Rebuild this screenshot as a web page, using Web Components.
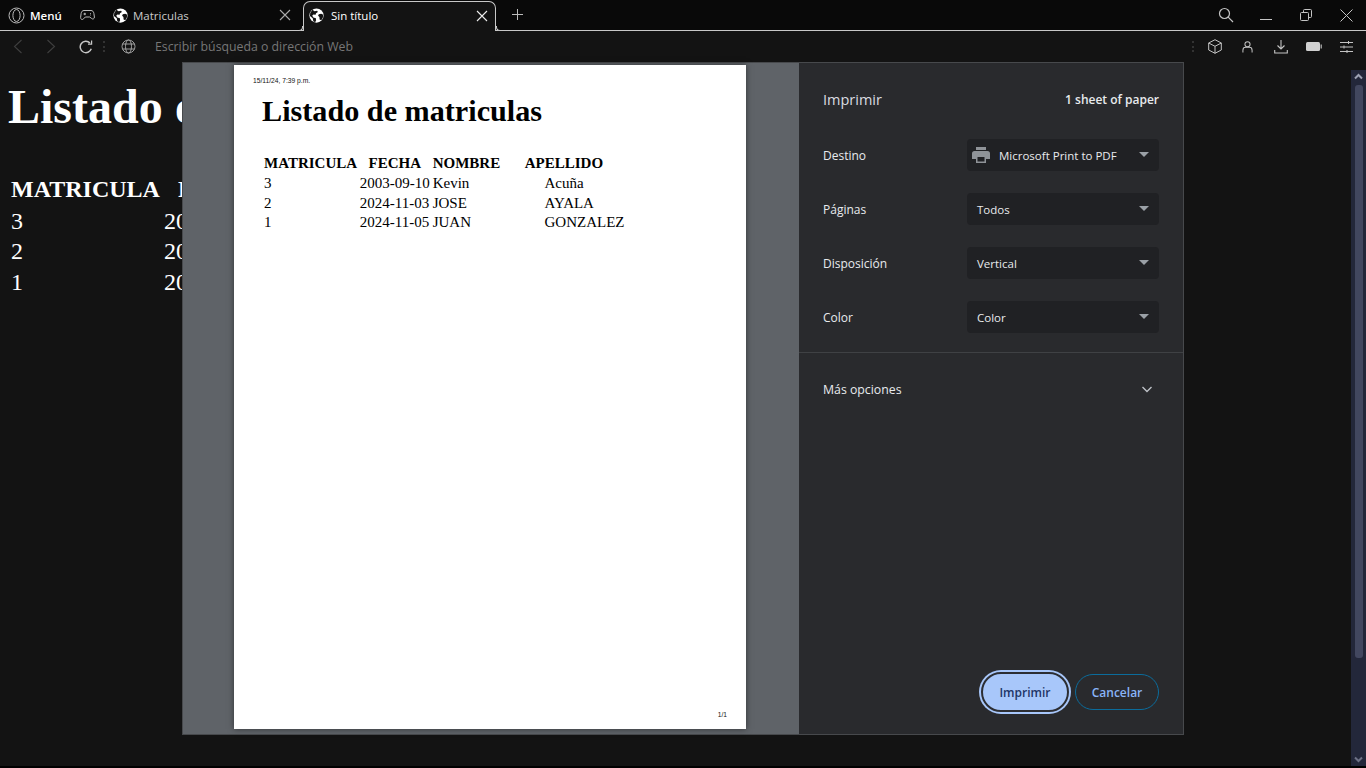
<!DOCTYPE html>
<html lang="es">
<head>
<meta charset="utf-8">
<title>Sin título</title>
<style>
    html, body{
        margin: 0;
        height: 100%;
        overflow: hidden;
        background: #000;
    }
    body{
        display: flex;
        flex-direction: column;
        height: 766px;
        position: relative;
        font-family: "Open Sans", "Liberation Sans", sans-serif;
    }
</style>
</head>
<body>
    <browser-tabs></browser-tabs>
    <browser-toolbar></browser-toolbar>
    <browser-page>
        <matricula-list style="font-size:24px;color:#fff;--h1:48px;--h1-top:17px;--h1-bottom:40px;--left:3px;--row:30.6px;--gap:4px;--head-pad:1px"></matricula-list>
    </browser-page>
    <print-dialog>
        <print-preview slot="preview">
            <matricula-list style="font-size:15px;color:#000;--h1:30.2px;--h1-top:1px;--h1-bottom:25px;--left:2px;--row:19.5px;--gap:2.8px;--head-pad:1px"></matricula-list>
        </print-preview>
        <print-row slot="rows" label="Destino" value="Microsoft Print to PDF" printer></print-row>
        <print-row slot="rows" label="Páginas" value="Todos"></print-row>
        <print-row slot="rows" label="Disposición" value="Vertical"></print-row>
        <print-row slot="rows" label="Color" value="Color"></print-row>
    </print-dialog>

<script>
const GLOBE = `<svg width="15" height="15" viewBox="0 0 16 16"><circle cx="8" cy="8" r="7.6" fill="#fff"/><path d="M3.6 1.9 6 3.4l2.6-.6.9 1.500-2 1.200-.5 1.700-2.300-.3-1.300 1.300 1.600 2.200 2.200.2.4 2.400-1 2.200-2-1.100-.6-3.200L1 8.400l.3-3zM10.400 6.600l2.600-.5 2.200 1.200-.5 3.200-1.600 2.600-1.800-.8-.2-2.700-1.400-1.300z" fill="#131313"/></svg>`;
const CROSS = `<svg width="12" height="12" viewBox="0 0 12 12"><path d="M1 1l10 10M11 1 1 11" stroke="currentColor" stroke-width="1.100" fill="none"/></svg>`;

class BrowserTabs extends HTMLElement {
    constructor(){
        super();
        this.attachShadow({mode: 'open'});
        this.shadowRoot.innerHTML = `
        <style>
            :host{
                display: flex;
                align-items: stretch;
                height: 31px;
                box-sizing: border-box;
                background: #090909;
                color: #fff;
                font-size: 11.500px;
                border-bottom: 1px solid #c8c8c8;
            }
            .menu{
                display: flex;
                align-items: center;
                gap: 5px;
                width: 80px;
                padding-left: 8px;
                box-sizing: border-box;
                font-weight: 600;
            }
            .pad{
                display: flex;
                align-items: center;
                width: 33px;
            }
            .tab{
                display: flex;
                align-items: center;
                gap: 5px;
                width: 190px;
                box-sizing: border-box;
                padding: 0 12px 0 0;
                color: #c9c9c9;
            }
            .tab span{ flex: 1; }
            .tab svg:last-child{ color: #aaa; }
            .tab.active{
                position: relative;
                width: 193px;
                margin: 1px 0 -1px 0;
                padding: 0 7px 2px 5px;
                gap: 7px;
                background: #131313;
                border: 1px solid #c8c8c8;
                border-bottom: 0;
                border-radius: 7px 7px 0 0;
                color: #fff;
            }
            .tab.active::before, .tab.active::after{
                content: "";
                position: absolute;
                bottom: 0;
                width: 4px;
                height: 4px;
                background: #090909;
                border-bottom: 1px solid #c8c8c8;
            }
            .tab.active::before{
                left: -6px;
                border-right: 1px solid #c8c8c8;
                border-bottom-right-radius: 4px;
            }
            .tab.active::after{
                right: -6px;
                border-left: 1px solid #c8c8c8;
                border-bottom-left-radius: 4px;
            }
            .tab.active svg:last-child{ color: #eee; }
            .plus{
                display: flex;
                align-items: center;
                padding: 0 0 2px 16px;
                color: #bbb;
            }
            .right{
                margin-left: auto;
                display: flex;
                align-items: center;
                color: #c4c4c4;
            }
            .right div{
                width: 40px;
                display: flex;
                justify-content: center;
            }
        </style>
        <div class="menu">
            <svg width="17" height="17" viewBox="0 0 17 17" fill="none" stroke="#bbb" stroke-width="1"><circle cx="8.500" cy="8.500" r="7.500"/><ellipse cx="8.500" cy="8.500" rx="3.600" ry="6"/></svg>
            <span>Menú</span>
        </div>
        <div class="pad">
            <svg width="15" height="12" viewBox="0 0 15 12" fill="none" stroke="#bbb" stroke-width="1"><path d="M4 1.500h7c1.600 0 2.500 1 2.900 3l.5 3.500c.2 1.800-1.800 2.700-3 1.300L9.700 8H5.300l-1.700 1.800C2.400 11.200.4 10.300.6 8.500l.5-4c.4-2 1.300-3 2.900-3z"/><path d="M3.500 5h2.500M4.800 3.800v2.400M10 4.500h.8M10 6h.8"/></svg>
        </div>
        <div class="tab">${GLOBE}<span>Matriculas</span>${CROSS}</div>
        <div class="tab active">${GLOBE}<span>Sin título</span>${CROSS}</div>
        <div class="plus"><svg width="11" height="11" viewBox="0 0 11 11"><path d="M5.500 0v11M0 5.500h11" stroke="currentColor" fill="none"/></svg></div>
        <div class="right">
            <div><svg width="16" height="16" viewBox="0 0 16 16" fill="none" stroke="currentColor" stroke-width="1.200"><circle cx="6.500" cy="6.500" r="5"/><path d="M10.200 10.200 15 15"/></svg></div>
            <div><svg width="12" height="12" viewBox="0 0 12 12"><path d="M0 10.500h12" stroke="currentColor" fill="none"/></svg></div>
            <div><svg width="12" height="12" viewBox="0 0 12 12" fill="none" stroke="currentColor"><rect x=".5" y="3.500" width="8" height="8" rx="1"/><path d="M3.500 3.500v-2a1 1 0 0 1 1-1h6a1 1 0 0 1 1 1v6a1 1 0 0 1-1 1h-2"/></svg></div>
            <div><svg width="13" height="13" viewBox="0 0 13 13"><path d="M.5.500l12 12M12.500.500l-12 12" stroke="currentColor" fill="none"/></svg></div>
        </div>`;
    }
}

class BrowserToolbar extends HTMLElement {
    constructor(){
        super();
        this.attachShadow({mode: 'open'});
        this.shadowRoot.innerHTML = `
        <style>
            :host{
                display: flex;
                align-items: center;
                height: 31px;
                background: #131313;
                color: #c4c4c4;
                font-size: 12.300px;
                padding-left: 13px;
            }
            .nav{ width: 33px; display: flex; color: #3f3f3f; }
            .reload{ width: 24px; display: flex; }
            .dots{ width: 2px; height: 11px; border-left: 2px dotted #333; margin-right: 14px; }
            .globe{ display: flex; margin-right: 19px; color: #aaa; }
            .hint{ color: #777; flex: 1; }
            .icons{ display: flex; align-items: center; }
            .icons .dots{ margin-right: 2px; }
            .icons div.i{ width: 33px; display: flex; justify-content: center; }
            .icons div.i:last-child{ margin-right: 3px; }
        </style>
        <div class="nav"><svg width="10" height="15" viewBox="0 0 10 15"><path d="M8.500 1 1.500 7.500l7 6.500" stroke="currentColor" fill="none" stroke-width="1.100"/></svg></div>
        <div class="nav"><svg width="10" height="15" viewBox="0 0 10 15"><path d="M1.500 1l7 6.500-7 6.500" stroke="currentColor" fill="none" stroke-width="1.100"/></svg></div>
        <div class="reload"><svg width="14" height="14" viewBox="0 0 14 14" fill="none" stroke="#c8c8c8" stroke-width="1.400"><path d="M12.300 8.800A5.700 5.700 0 1 1 11 3"/><path d="M12.600 .6v3.600H9" stroke-width="1.200"/></svg></div>
        <div class="dots"></div>
        <div class="globe"><svg width="15" height="15" viewBox="0 0 15 15" fill="none" stroke="currentColor" stroke-width=".9"><circle cx="7.500" cy="7.500" r="6.500"/><ellipse cx="7.500" cy="7.500" rx="3" ry="6.500"/><path d="M1.500 5h12M1.500 10h12"/></svg></div>
        <div class="hint">Escribir búsqueda o dirección Web</div>
        <div class="icons">
            <div class="dots"></div>
            <div class="i"><svg width="14" height="15" viewBox="0 0 14 15" fill="none" stroke="currentColor"><path d="M7 .7 13.300 4v7L7 14.300.7 11V4zM.7 4 7 7.300 13.300 4M7 7.300v7"/></svg></div>
            <div class="i"><svg width="11" height="12" viewBox="0 0 12 13" fill="none" stroke="currentColor" stroke-width="1.100"><circle cx="6" cy="3.500" r="2.800"/><path d="M1 12.500V10c0-2 1.500-3.200 3-3.200h4c1.500 0 3 1.200 3 3.200v2.500"/></svg></div>
            <div class="i"><svg width="14" height="14" viewBox="0 0 14 14" fill="none" stroke="currentColor" stroke-width="1.100"><path d="M7 0v9M3.500 5.500 7 9l3.500-3.500M.7 10v3h12.600v-3"/></svg></div>
            <div class="i"><svg width="16" height="9" viewBox="0 0 16 9"><rect width="14" height="9" rx="1.500" fill="#d0d0d0"/><rect x="14.500" y="2.500" width="1.500" height="4" fill="#999"/></svg></div>
            <div class="i"><svg width="13" height="12" viewBox="0 0 13 12" fill="none" stroke="currentColor"><path d="M0 1.500h13M0 6h13M0 10.500h13M8.500 0v3M4 4.500v3M7 9v3"/></svg></div>
        </div>`;
    }
}

class BrowserPage extends HTMLElement {
    constructor(){
        super();
        this.attachShadow({mode: 'open'});
        this.shadowRoot.innerHTML = `
        <style>
            :host{
                display: flex;
                flex: 1;
                min-height: 0;
                background: #131313;
                position: relative;
            }
            .content{
                flex: 1;
                padding-left: 8px;
                overflow: hidden;
            }
            .bar{
                width: 15px;
                margin-top: 8px;
                background: #23273a;
                display: flex;
                flex-direction: column;
                align-items: center;
            }
            .bar svg{ flex: none; margin: 3px 0; }
            .thumb{
                width: 8px;
                margin: 2px 0 auto;
                height: 573px;
                background: #42475f;
                border-radius: 3px;
            }
        </style>
        <div class="content"><slot></slot></div>
        <div class="bar">
            <svg width="9" height="7" viewBox="0 0 9 7"><path d="M1 5.500 4.500 2 8 5.500" stroke="#9da1b3" stroke-width="2" fill="none"/></svg>
            <div class="thumb"></div>
            <svg width="9" height="7" viewBox="0 0 9 7"><path d="M1 1.500 4.500 5 8 1.500" stroke="#6d7186" stroke-width="2" fill="none"/></svg>
        </div>`;
    }
}

const listTemplate = document.createElement('template');
listTemplate.innerHTML = `
    <style>
        :host{
            display: block;
            font-family: "Liberation Serif", "Times New Roman", serif;
        }
        h1{
            font-size: var(--h1);
            line-height: 1.15;
            margin: var(--h1-top) 0 var(--h1-bottom);
            white-space: nowrap;
        }
        table{
            border-collapse: separate;
            border-spacing: 0;
            margin-left: var(--left);
            white-space: nowrap;
        }
        th, td{
            padding: 0 var(--gap) 0 0;
            height: var(--row);
            line-height: var(--row);
        }
        th{ text-align: center; padding-bottom: var(--head-pad); }
        th.name{ text-align: left; width: 5.950em; }
        th.last{ text-align: left; }
        td{ text-align: left; }
        td.last{ padding-left: 1.320em; }
    </style>
    <h1>Listado de matriculas</h1>
    <table>
        <tr><th>MATRICULA</th><th>FECHA</th><th class="name">NOMBRE</th><th class="last">APELLIDO</th></tr>
        <tr><td>3</td><td>2003-09-10</td><td>Kevin</td><td class="last">Acuña</td></tr>
        <tr><td>2</td><td>2024-11-03</td><td>JOSE</td><td class="last">AYALA</td></tr>
        <tr><td>1</td><td>2024-11-05</td><td>JUAN</td><td class="last">GONZALEZ</td></tr>
    </table>`;

class MatriculaList extends HTMLElement {
    constructor(){
        super();
        this.attachShadow({mode: 'open'});
        this.shadowRoot.appendChild(listTemplate.content.cloneNode(true));
    }
}

class PrintPreview extends HTMLElement {
    constructor(){
        super();
        this.attachShadow({mode: 'open'});
        this.shadowRoot.innerHTML = `
        <style>
            :host{
                display: flex;
                justify-content: center;
                width: 616px;
                box-sizing: border-box;
                padding: 2px 2px 5px 0;
                background: #5f6368;
                flex: none;
            }
            .paper{
                width: 512px;
                background: #fff;
                color: #000;
                box-shadow: 0 0 6px rgba(0, 0, 0, .5);
                display: flex;
                flex-direction: column;
                padding: 11px 19px 10px;
                box-sizing: border-box;
            }
            .small{
                font: 6.700px/9px "Liberation Sans", Arial, sans-serif;
                color: #111;
            }
            .body{
                flex: 1;
                padding: 8px 0 0 9px;
            }
            .foot{ text-align: right; }
        </style>
        <div class="paper">
            <div class="small">15/11/24, 7:39 p.m.</div>
            <div class="body"><slot></slot></div>
            <div class="small foot">1/1</div>
        </div>`;
    }
}

class PrintRow extends HTMLElement {
    constructor(){
        super();
        this.attachShadow({mode: 'open'});
        const printer = this.hasAttribute('printer');
        this.shadowRoot.innerHTML = `
        <style>
            :host{
                display: flex;
                align-items: center;
                justify-content: space-between;
                height: 32px;
                font-size: 12px;
                color: #e8eaed;
            }
            .select{
                display: flex;
                align-items: center;
                width: 192px;
                height: 32px;
                box-sizing: border-box;
                padding: 0 10px 0 ${printer ? 5 : 10}px;
                gap: 9px;
                background: #202124;
                border-radius: 4px;
                font-size: 11.500px;
            }
            .select span{ flex: 1; }
            .arrow{
                width: 0;
                height: 0;
                border: 5px solid transparent;
                border-top: 5px solid #9aa0a6;
                border-bottom: 0;
                margin-top: -2px;
            }
        </style>
        <label>${this.getAttribute('label')}</label>
        <div class="select">
            ${printer ? `<svg width="18" height="16" viewBox="0 0 18 16"><path d="M4 0h10v3H4zM2.500 4h13A2.500 2.500 0 0 1 18 6.500V12h-4v4H4v-4H0V6.500A2.500 2.500 0 0 1 2.500 4z" fill="#8f9398"/><rect x="5.500" y="10" width="7" height="4.500" fill="#202124"/></svg>` : ''}
            <span>${this.getAttribute('value')}</span>
            <div class="arrow"></div>
        </div>`;
    }
}

class PrintDialog extends HTMLElement {
    constructor(){
        super();
        this.attachShadow({mode: 'open'});
        this.shadowRoot.innerHTML = `
        <style>
            :host{
                position: absolute;
                left: 182px;
                top: 62px;
                width: 1002px;
                height: 673px;
                box-sizing: border-box;
                display: flex;
                border: 1px solid #47494c;
                background: #292a2d;
            }
            .side{
                flex: 1;
                display: flex;
                flex-direction: column;
                color: #e8eaed;
                font-size: 12px;
            }
            .head{
                display: flex;
                justify-content: space-between;
                align-items: center;
                padding: 25px 24px 0;
                height: 22px;
            }
            .title{ font-size: 14.500px; color: #dadce0; }
            .count{ font-weight: 600; }
            .rows{
                display: flex;
                flex-direction: column;
                gap: 22px;
                padding: 29px 24px 19px;
                border-bottom: 1px solid #3f4144;
            }
            .more{
                display: flex;
                justify-content: space-between;
                align-items: center;
                padding: 27px 30px 0 24px;
                height: 18px;
                font-size: 12.300px;
            }
            .btns{
                margin-top: auto;
                display: flex;
                justify-content: flex-end;
                align-items: center;
                gap: 8px;
                padding: 0 24px 24px;
            }
            .btn{
                display: flex;
                align-items: center;
                justify-content: center;
                height: 36px;
                box-sizing: border-box;
                border-radius: 18px;
                font-weight: 600;
            }
            .ok{
                width: 84px;
                background: #a8c7fa;
                color: #1f3566;
                outline: 2px solid #2c2e33;
                box-shadow: 0 0 0 4px #a8c7fa;
                border-radius: 18px;
            }
            .no{
                width: 84px;
                border: 1px solid #0b6c9c;
                color: #8ab4f8;
            }
        </style>
        <slot name="preview"></slot>
        <div class="side">
            <div class="head"><span class="title">Imprimir</span><span class="count">1 sheet of paper</span></div>
            <div class="rows"><slot name="rows"></slot></div>
            <div class="more">
                <span>Más opciones</span>
                <svg width="12" height="7" viewBox="0 0 12 7"><path d="M1.500 1 6 5.500 10.500 1" stroke="#bdc1c6" stroke-width="1.400" fill="none"/></svg>
            </div>
            <div class="btns"><div class="btn ok">Imprimir</div><div class="btn no">Cancelar</div></div>
        </div>`;
    }
}

customElements.define('browser-tabs', BrowserTabs);
customElements.define('browser-toolbar', BrowserToolbar);
customElements.define('browser-page', BrowserPage);
customElements.define('matricula-list', MatriculaList);
customElements.define('print-preview', PrintPreview);
customElements.define('print-row', PrintRow);
customElements.define('print-dialog', PrintDialog);
</script>
</body>
</html>
